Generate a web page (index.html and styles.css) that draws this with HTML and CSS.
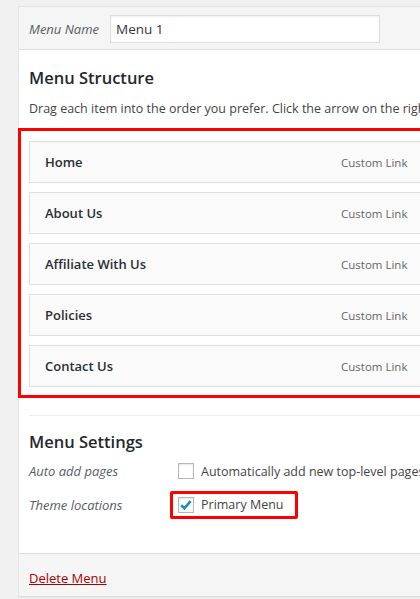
FILE: index.html
```html
<!DOCTYPE html>
<html lang="en">
<head>
<meta charset="utf-8">
<title>Menu Editor</title>
<link rel="stylesheet" href="styles.css">
</head>
<body>
<div class="panel">
  <div class="panel-header">
    <label class="name-label" for="menu-name">Menu Name</label>
    <input class="name-input" id="menu-name" type="text" value="Menu 1">
  </div>
  <div class="panel-body">
    <h3 class="section-title">Menu Structure</h3>
    <p class="hint">Drag each item into the order you prefer. Click the arrow on the right of the item to reveal additional configuration options.</p>
    <div class="highlight-box">
      <ul class="menu-items">
        <li class="menu-item"><span class="item-title">Home</span><span class="item-type">Custom Link</span></li>
        <li class="menu-item"><span class="item-title">About Us</span><span class="item-type">Custom Link</span></li>
        <li class="menu-item"><span class="item-title">Affiliate With Us</span><span class="item-type">Custom Link</span></li>
        <li class="menu-item"><span class="item-title">Policies</span><span class="item-type">Custom Link</span></li>
        <li class="menu-item"><span class="item-title">Contact Us</span><span class="item-type">Custom Link</span></li>
      </ul>
    </div>
    <div class="settings">
      <h3 class="section-title settings-title">Menu Settings</h3>
      <div class="setting-row">
        <span class="setting-label">Auto add pages</span>
        <label class="check-label"><span class="checkbox"></span><span>Automatically add new top-level pages to this menu</span></label>
      </div>
      <div class="setting-row">
        <span class="setting-label">Theme locations</span>
        <label class="check-label highlight-check"><span class="checkbox checked"><svg viewBox="0 0 16 16" width="16" height="16"><path d="M3.2 8.2 L6.4 11.3 L12.6 4.2" fill="none" stroke="#1e8cbe" stroke-width="2.6" stroke-linejoin="miter"/></svg></span><span>Primary Menu</span></label>
      </div>
    </div>
  </div>
  <div class="panel-footer">
    <a class="delete-link" href="#">Delete Menu</a>
  </div>
</div>
</body>
</html>
```
FILE: styles.css
```css
html, body {
  margin: 0;
  padding: 0;
}
body {
  background: #f1f1f1;
  font-family: "Open Sans", "Noto Sans", sans-serif;
  font-size: 12.5px;
  color: #23282d;
  overflow: hidden;
  padding: 6px 0 0 18px;
  height: 599px;
  box-sizing: border-box;
}
.panel {
  width: 480px;
  background: #fff;
  border: 1px solid #e5e5e5;
  border-right: none;
}
.panel-header {
  background: #f5f5f5;
  border-bottom: 1px solid #dddddd;
  display: flex;
  align-items: center;
  padding: 8px 10px 6px;
}
.name-label {
  font-style: italic;
  font-size: 13px;
  color: #555d66;
  width: 81px;
}
.name-input {
  width: 270px;
  height: 28px;
  box-sizing: border-box;
  border: 1px solid #dddddd;
  box-shadow: inset 0 1px 2px rgba(0,0,0,0.07);
  background: #fff;
  font-family: inherit;
  font-size: 13.5px;
  color: #32373c;
  padding: 0 5px;
  margin: 0;
}
.panel-body {
  padding: 0 10px;
}
.section-title {
  margin: 0;
  font-size: 16.5px;
  font-weight: 600;
  color: #23282d;
  padding-top: 16px;
  line-height: 24px;
}
.hint {
  margin: 9px 0 0;
  line-height: 20px;
  color: #444;
  white-space: nowrap;
}
.highlight-box {
  margin: 9px 0 0 -11px;
  border: 3px solid #ff0000;
  border-right: none;
  padding: 10px 0 8px 8px;
}
.menu-items {
  list-style: none;
  margin: 0;
  padding: 0;
  display: flex;
  flex-direction: column;
  gap: 9px;
}
.menu-item {
  display: grid;
  grid-template-columns: 296px 1fr;
  align-items: center;
  height: 42px;
  box-sizing: border-box;
  border: 1px solid #dfdfdf;
  background: #fafafa;
  padding: 0 15px;
}
.item-title {
  font-weight: 600;
  font-size: 13px;
  color: #2a2e33;
}
.item-type {
  color: #666;
  font-size: 11.5px;
}
.settings {
  margin-top: 17px;
  border-top: 1px solid #eeeeee;
  padding-bottom: 34px;
}
.settings-title {
  padding-top: 14px;
}
.setting-row {
  display: grid;
  grid-template-columns: 149px 1fr;
  align-items: center;
  margin-top: 8px;
}
.setting-row + .setting-row {
  margin-top: 11px;
}
.setting-label {
  font-style: italic;
  color: #555d66;
  font-size: 13px;
}
.check-label {
  display: inline-flex;
  align-items: center;
  gap: 7px;
  white-space: nowrap;
  color: #444;
  font-size: 12.5px;
}
.checkbox {
  width: 16px;
  height: 16px;
  box-sizing: border-box;
  border: 1px solid #b4b9be;
  background: #fff;
  box-shadow: inset 0 1px 2px rgba(0,0,0,0.1);
  display: inline-block;
  flex: none;
}
.checkbox svg {
  display: block;
  margin: -1px;
}
.highlight-check {
  justify-self: start;
  border: 3px solid #ff0000;
  border-radius: 2px;
  margin-left: -8px;
  padding: 2px 11px 3px 5px;
}
.panel-footer {
  background: #f5f5f5;
  border-top: 1px solid #dddddd;
  border-bottom: 1px solid #dddddd;
  height: 42px;
  padding: 0 10px;
  display: flex;
  align-items: center;
}
.delete-link {
  color: #a00;
  text-decoration: underline;
  font-size: 13px;
  margin-top: 5px;
}
```
